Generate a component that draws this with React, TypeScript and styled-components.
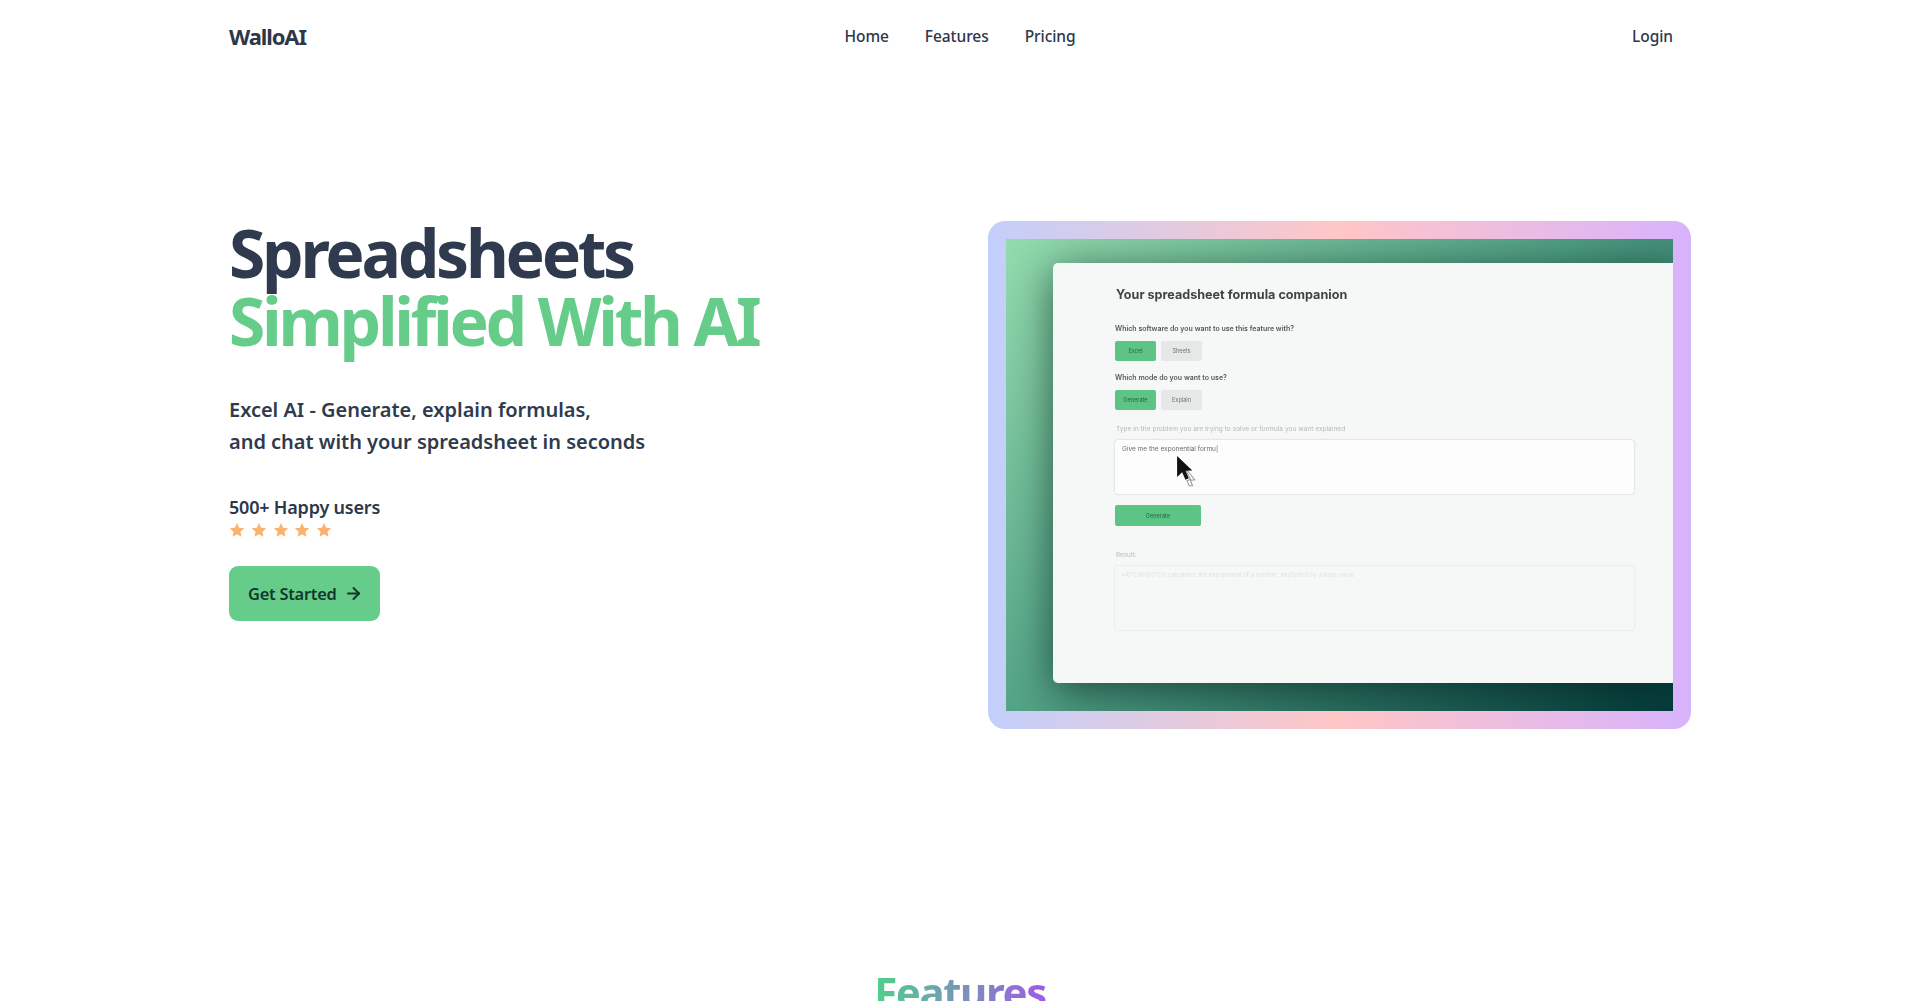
import React from "react";
import styled, { createGlobalStyle } from "styled-components";
import { ArrowRight } from "lucide-react";

const Global = createGlobalStyle`
  html, body { margin: 0; padding: 0; background: #fff; height: 1001px; overflow: hidden; }
  body { font-family: "Noto Sans", "Open Sans", sans-serif; color: #2d3748; }
  * { box-sizing: border-box; }
`;

const Page = styled.div`
  width: 1462px;
  margin: 0 auto;
`;

const Nav = styled.header`
  display: grid;
  grid-template-columns: 1fr auto 1fr;
  align-items: center;
  height: 72px;
`;

const Logo = styled.div`
  font-size: 22px;
  font-weight: 700;
  letter-spacing: -1.1px;
`;

const NavLinks = styled.nav`
  display: flex;
  gap: 36px;
`;

const NavLink = styled.a`
  font-size: 15.5px;
  font-weight: 500;
  letter-spacing: -0.06px;
  color: #2d3748;
`;

const LoginLink = styled(NavLink)`
  justify-self: end;
  margin-right: 18px;
`;

const Hero = styled.section`
  display: flex;
  justify-content: space-between;
  align-items: flex-start;
  padding-top: 146px;
`;

const Copy = styled.div`
  display: flex;
  flex-direction: column;
  align-items: flex-start;
`;

const Headline = styled.h1`
  margin: 0;
  font-size: 66px;
  line-height: 68px;
  font-weight: 700;
  letter-spacing: -3.3px;
  color: #2f3a4e;
`;

const Accent = styled.span`
  display: block;
  color: #65cc8a;
`;

const Sub = styled.p`
  margin: 40px 0 0;
  font-size: 20px;
  line-height: 32px;
  font-weight: 600;
  letter-spacing: -0.02px;
  color: #2f3a4e;
`;

const Users = styled.div`
  margin-top: 37px;
  font-size: 18px;
  line-height: 24px;
  font-weight: 600;
  letter-spacing: -0.2px;
`;

const Stars = styled.div`
  display: flex;
  gap: 5.8px;
  margin-top: 3px;
`;

const Cta = styled.a`
  display: flex;
  align-items: center;
  gap: 7px;
  margin-top: 28px;
  width: 151px;
  height: 55px;
  padding-left: 19px;
  border-radius: 9px;
  background: #65cc8a;
  color: #12382a;
  font-size: 16.4px;
  font-weight: 600;
  letter-spacing: -0.25px;
`;

const Frame = styled.div`
  width: 703px;
  height: 508px;
  margin-top: 3px;
  padding: 18px;
  border-radius: 17px;
  background: linear-gradient(90deg, #c3cffb 0%, #ffc6c6 50%, #d8b3fd 100%);
`;

const Video = styled.div`
  position: relative;
  height: 472px;
  padding: 24px 0 28px 47px;
  overflow: hidden;
  background: linear-gradient(138deg, #93dcae 0%, #4f9f84 48%, #033d3d 100%);
  font-family: "Inter", "Liberation Sans", sans-serif;
`;

const Shot = styled.div`
  height: 100%;
  padding: 24px 40px 0 62px;
  border-radius: 5px 0 0 5px;
  background: #f6f8f7;
  box-shadow: 0 8px 42px rgba(0, 25, 20, 0.62);
  filter: blur(0.7px);
`;

const ShotTitle = styled.div`
  font-size: 12.6px;
  line-height: 16px;
  font-weight: 700;
  color: #3f4446;
  margin-left: 1px;
`;

const Question = styled.div<{ $top: number }>`
  margin-top: ${(p) => p.$top}px;
  font-size: 7px;
  line-height: 10px;
  font-weight: 600;
  color: #55595b;
`;

const ToggleRow = styled.div`
  display: flex;
  gap: 5px;
  margin-top: 7px;
`;

const Toggle = styled.div<{ $active?: boolean }>`
  display: flex;
  align-items: center;
  justify-content: center;
  width: 41px;
  height: 20px;
  border-radius: 2px;
  font-size: 5.6px;
  background: ${(p) => (p.$active ? "#5cc585" : "#e6e8e7")};
  color: ${(p) => (p.$active ? "#2d5f45" : "#6d7270")};
`;

const Hint = styled.div`
  margin-top: 14px;
  margin-left: 1px;
  font-size: 6.6px;
  line-height: 10px;
  color: #b5b9b8;
`;

const Prompt = styled.div`
  margin-top: 6px;
  width: 519px;
  height: 54px;
  padding: 4px 7px;
  border-radius: 3px;
  background: #fdfdfd;
  box-shadow: 0 0 2px rgba(0, 0, 0, 0.25);
  font-size: 6.5px;
  line-height: 10px;
  color: #6a6e6d;
`;

const Generate = styled.div`
  display: flex;
  align-items: center;
  justify-content: center;
  width: 86px;
  height: 21px;
  margin-top: 11px;
  border-radius: 2px;
  background: #5cc585;
  font-size: 5.6px;
  color: #2d5f45;
`;

const ResultLabel = styled.div`
  margin-top: 24px;
  margin-left: 1px;
  font-size: 6.4px;
  line-height: 10px;
  color: #b5b9b8;
`;

const Result = styled.div`
  margin-top: 6px;
  width: 519px;
  height: 64px;
  padding: 4px 6px;
  border-radius: 3px;
  box-shadow: 0 0 2px rgba(0, 0, 0, 0.14);
  font-size: 6px;
  line-height: 10px;
  color: #dfe3e2;
`;

const Cursor = styled.svg`
  position: absolute;
  left: 170px;
  top: 216px;
  filter: blur(0.4px);
`;

const FeaturesTitle = styled.h2`
  margin: 0;
  padding-top: 235px;
  text-align: center;
  font-size: 42px;
  line-height: 56px;
  font-weight: 700;
  letter-spacing: -1.4px;
`;

const GradientText = styled.span`
  background: linear-gradient(90deg, #4fd18b 0%, #a259e6 100%);
  -webkit-background-clip: text;
  background-clip: text;
  color: transparent;
`;

const StarIcon = () => (
  <svg width="16" height="16" viewBox="0 0 24 24" fill="#fbb271">
    <path d="M12 1.5l3.2 7 7.6.9-5.6 5.2 1.5 7.6L12 18.4l-6.7 3.8 1.5-7.6L1.2 9.4l7.6-.9z" />
  </svg>
);

export default function App() {
  return (
    <Page>
      <Global />
      <Nav>
        <Logo>WalloAI</Logo>
        <NavLinks>
          <NavLink>Home</NavLink>
          <NavLink>Features</NavLink>
          <NavLink>Pricing</NavLink>
        </NavLinks>
        <LoginLink>Login</LoginLink>
      </Nav>
      <Hero>
        <Copy>
          <Headline>
            Spreadsheets
            <Accent>Simplified With AI</Accent>
          </Headline>
          <Sub>
            Excel AI - Generate, explain formulas,
            <br />
            and chat with your spreadsheet in seconds
          </Sub>
          <Users>500+ Happy users</Users>
          <Stars>
            {[0, 1, 2, 3, 4].map((i) => (
              <StarIcon key={i} />
            ))}
          </Stars>
          <Cta>
            Get Started <ArrowRight size={19} strokeWidth={2.5} />
          </Cta>
        </Copy>
        <Frame>
          <Video>
            <Shot>
              <ShotTitle>Your spreadsheet formula companion</ShotTitle>
              <Question $top={21}>Which software do you want to use this feature with?</Question>
              <ToggleRow>
                <Toggle $active>Excel</Toggle>
                <Toggle>Sheets</Toggle>
              </ToggleRow>
              <Question $top={12}>Which mode do you want to use?</Question>
              <ToggleRow>
                <Toggle $active>Generate</Toggle>
                <Toggle>Explain</Toggle>
              </ToggleRow>
              <Hint>Type in the problem you are trying to solve or formula you want explained</Hint>
              <Prompt>Give me the exponential formu|</Prompt>
              <Generate>Generate</Generate>
              <ResultLabel>Result:</ResultLabel>
              <Result>=A1*EXP(B1*C1) calculates the exponential of a number, multiplied by a base value</Result>
            </Shot>
            <Cursor width="22" height="33" viewBox="0 0 20 30">
              <path d="M7 10l6 12-3 1.5 2 4.5h3l-2-5 4-.5z" fill="#fff" stroke="#9a9a9a" strokeWidth="1" />
              <path d="M1 1v19l4.6-4.4 3 7 3-1.4-3-6.8 6.2-.4z" fill="#111" />
            </Cursor>
          </Video>
        </Frame>
      </Hero>
      <FeaturesTitle>
        <GradientText>Features</GradientText>
      </FeaturesTitle>
    </Page>
  );
}
